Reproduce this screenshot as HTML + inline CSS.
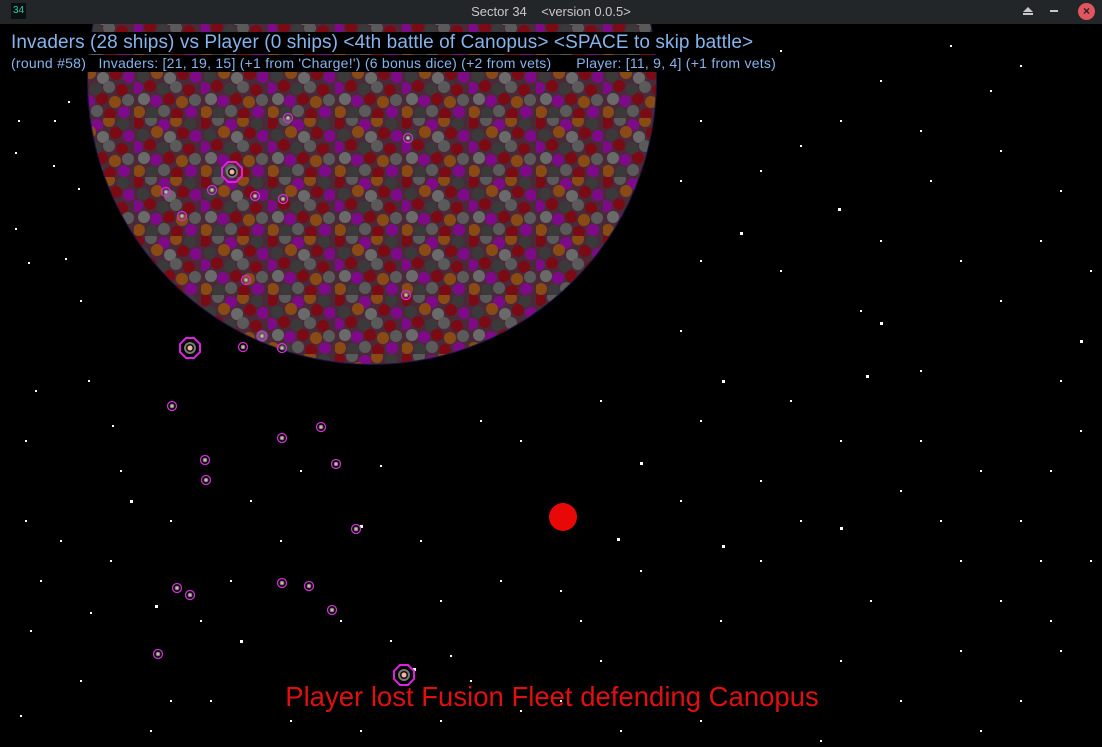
<!DOCTYPE html>
<html><head><meta charset="utf-8"><style>
html,body{margin:0;padding:0;background:#000;width:1102px;height:747px;overflow:hidden;font-family:"Liberation Sans",sans-serif}
#bar{position:absolute;left:0;top:0;width:1102px;height:24px}
#bar .t{position:absolute;left:0;width:1102px;top:4px;text-align:center;color:#c8c8c8;font-size:13px}
#ic{position:absolute;left:11px;top:3px;width:15px;height:16px;background:#0a0f10;color:#2fd0b0;font-size:10px;line-height:16px;text-align:center}
#close{position:absolute;left:1078px;top:3px;width:17px;height:17px;border-radius:50%;background:#e05560;color:#222;font-size:12px;line-height:17px;text-align:center;font-weight:bold}
.l1{position:absolute;left:8px;top:32px;background:#000;color:#86b4ec;font-size:19px;letter-spacing:0.1px;padding:0 3px;white-space:pre;line-height:22px}
.l2{position:absolute;left:8px;top:55px;background:#000;color:#86b4ec;font-size:14px;letter-spacing:0.25px;padding:0 3px;white-space:pre;line-height:17px}
#msg{position:absolute;left:0;width:1104px;top:681px;text-align:center;color:#e01010;font-size:27.5px}
</style></head><body>
<svg width="1102" height="747" style="position:absolute;left:0;top:0">
<defs>
<pattern id="p" width="67" height="59" patternUnits="userSpaceOnUse">
<rect width="67" height="59" fill="#4a2a38"/>
<circle cx="4" cy="5" r="6" fill="#7a0a14"/><circle cx="17" cy="2" r="6" fill="#5a5a5a"/><circle cx="30" cy="7" r="6" fill="#7e0a8a"/><circle cx="42" cy="3" r="6" fill="#8a4a14"/><circle cx="56" cy="6" r="6" fill="#3a3a3a"/>
<circle cx="9" cy="17" r="6" fill="#3a3a3a"/><circle cx="23" cy="14" r="6" fill="#8a4a14"/><circle cx="36" cy="19" r="6" fill="#6a6a6a"/><circle cx="49" cy="15" r="6" fill="#7a0a14"/><circle cx="62" cy="18" r="6" fill="#7e0a8a"/>
<circle cx="3" cy="29" r="6" fill="#7e0a8a"/><circle cx="16" cy="27" r="6" fill="#7a0a14"/><circle cx="29" cy="30" r="6" fill="#3a3a3a"/><circle cx="42" cy="28" r="6" fill="#5a5a5a"/><circle cx="55" cy="31" r="6" fill="#7a0a14"/>
<circle cx="10" cy="40" r="6" fill="#6a6a6a"/><circle cx="22" cy="42" r="6" fill="#7e0a8a"/><circle cx="35" cy="40" r="6" fill="#7a0a14"/><circle cx="48" cy="43" r="6" fill="#8a4a14"/><circle cx="61" cy="41" r="6" fill="#5a5a5a"/>
<circle cx="5" cy="53" r="6" fill="#8a4a14"/><circle cx="18" cy="54" r="6" fill="#3a3a3a"/><circle cx="30" cy="52" r="6" fill="#5a5a5a"/><circle cx="43" cy="55" r="6" fill="#7a0a14"/><circle cx="57" cy="53" r="6" fill="#7e0a8a"/>
</pattern>
<g id="s"><circle r="4.5" fill="none" stroke="#d030d0" stroke-width="1.3"/><circle r="2.3" fill="#888"/><circle r="1" fill="#f4c0b0"/></g>
<g id="b"><polygon points="-4,-10 4,-10 10,-4 10,4 4,10 -4,10 -10,4 -10,-4" fill="none" stroke="#e020e0" stroke-width="2"/><circle r="6" fill="#777"/><circle r="4" fill="#111"/><circle r="2.5" fill="#f0b8a0"/></g>
</defs>
<g fill="#fff">
<rect x="100" y="65" width="2" height="2"/><rect x="68" y="101" width="2" height="2"/><rect x="18" y="120" width="2" height="2"/><rect x="54" y="120" width="2" height="2"/><rect x="15" y="152" width="2" height="2"/><rect x="53" y="165" width="2" height="2"/><rect x="78" y="188" width="2" height="2"/><rect x="15" y="228" width="2" height="2"/><rect x="28" y="262" width="2" height="2"/><rect x="65" y="258" width="2" height="2"/><rect x="80" y="300" width="2" height="2"/><rect x="35" y="390" width="2" height="2"/><rect x="88" y="380" width="2" height="2"/><rect x="25" y="440" width="2" height="2"/><rect x="112" y="425" width="2" height="2"/><rect x="130" y="500" width="3" height="3"/><rect x="25" y="520" width="2" height="2"/><rect x="110" y="560" width="2" height="2"/><rect x="40" y="580" width="2" height="2"/><rect x="90" y="612" width="2" height="2"/><rect x="30" y="630" width="2" height="2"/><rect x="155" y="605" width="3" height="3"/><rect x="80" y="680" width="2" height="2"/><rect x="20" y="715" width="2" height="2"/><rect x="150" y="730" width="2" height="2"/><rect x="210" y="700" width="2" height="2"/><rect x="240" y="640" width="3" height="3"/><rect x="230" y="580" width="2" height="2"/><rect x="280" y="540" width="2" height="2"/><rect x="250" y="500" width="2" height="2"/><rect x="300" y="470" width="2" height="2"/><rect x="380" y="465" width="2" height="2"/><rect x="360" y="525" width="3" height="3"/><rect x="420" y="540" width="2" height="2"/><rect x="440" y="600" width="2" height="2"/><rect x="390" y="640" width="2" height="2"/><rect x="413" y="668" width="3" height="3"/><rect x="450" y="655" width="2" height="2"/><rect x="470" y="680" width="2" height="2"/><rect x="520" y="710" width="2" height="2"/><rect x="600" y="660" width="2" height="2"/><rect x="640" y="462" width="3" height="3"/><rect x="617" y="538" width="3" height="3"/><rect x="560" y="590" width="2" height="2"/><rect x="520" y="440" width="2" height="2"/><rect x="480" y="420" width="2" height="2"/><rect x="600" y="400" width="2" height="2"/><rect x="700" y="420" width="2" height="2"/><rect x="680" y="500" width="2" height="2"/><rect x="720" y="620" width="2" height="2"/><rect x="760" y="560" width="2" height="2"/><rect x="722" y="545" width="3" height="3"/><rect x="800" y="520" width="2" height="2"/><rect x="760" y="480" width="2" height="2"/><rect x="840" y="527" width="3" height="3"/><rect x="870" y="600" width="2" height="2"/><rect x="840" y="660" width="2" height="2"/><rect x="900" y="700" width="2" height="2"/><rect x="960" y="650" width="2" height="2"/><rect x="1000" y="600" width="2" height="2"/><rect x="960" y="560" width="2" height="2"/><rect x="1020" y="520" width="2" height="2"/><rect x="1050" y="470" width="2" height="2"/><rect x="1080" y="430" width="2" height="2"/><rect x="1060" y="380" width="2" height="2"/><rect x="1080" y="340" width="3" height="3"/><rect x="1000" y="300" width="2" height="2"/><rect x="960" y="260" width="2" height="2"/><rect x="1040" y="240" width="2" height="2"/><rect x="1060" y="190" width="2" height="2"/><rect x="1000" y="150" width="2" height="2"/><rect x="990" y="90" width="2" height="2"/><rect x="1020" y="65" width="2" height="2"/><rect x="950" y="45" width="2" height="2"/><rect x="880" y="80" width="2" height="2"/><rect x="840" y="120" width="2" height="2"/><rect x="800" y="145" width="2" height="2"/><rect x="838" y="208" width="3" height="3"/><rect x="740" y="232" width="3" height="3"/><rect x="880" y="240" width="2" height="2"/><rect x="780" y="270" width="2" height="2"/><rect x="700" y="260" width="2" height="2"/><rect x="680" y="330" width="2" height="2"/><rect x="722" y="380" width="3" height="3"/><rect x="860" y="310" width="2" height="2"/><rect x="880" y="322" width="3" height="3"/><rect x="920" y="370" width="2" height="2"/><rect x="866" y="375" width="3" height="3"/><rect x="790" y="400" width="2" height="2"/><rect x="840" y="440" width="2" height="2"/><rect x="920" y="440" width="2" height="2"/><rect x="980" y="470" width="2" height="2"/><rect x="900" y="490" width="2" height="2"/><rect x="940" y="520" width="2" height="2"/><rect x="1040" y="560" width="2" height="2"/><rect x="1060" y="650" width="2" height="2"/><rect x="1020" y="700" width="2" height="2"/><rect x="980" y="730" width="2" height="2"/><rect x="820" y="740" width="2" height="2"/><rect x="700" y="720" width="2" height="2"/><rect x="620" y="730" width="2" height="2"/><rect x="360" y="730" width="2" height="2"/><rect x="290" y="720" width="2" height="2"/><rect x="780" y="50" width="2" height="2"/><rect x="700" y="120" width="2" height="2"/><rect x="680" y="180" width="2" height="2"/><rect x="760" y="170" width="2" height="2"/><rect x="930" y="180" width="2" height="2"/><rect x="1090" y="270" width="2" height="2"/><rect x="920" y="130" width="2" height="2"/><rect x="1090" y="560" width="2" height="2"/><rect x="1050" y="620" width="2" height="2"/><rect x="580" y="620" width="2" height="2"/><rect x="500" y="580" width="2" height="2"/><rect x="640" y="570" width="2" height="2"/><rect x="120" y="470" width="2" height="2"/><rect x="170" y="520" width="2" height="2"/><rect x="60" y="540" width="2" height="2"/><rect x="200" y="620" width="2" height="2"/><rect x="170" y="700" width="2" height="2"/><rect x="340" y="620" width="2" height="2"/><rect x="440" y="720" width="2" height="2"/><rect x="560" y="700" width="2" height="2"/></g>
<circle cx="372" cy="80" r="285" fill="#1a1440"/>
<circle cx="372" cy="80" r="284" fill="url(#p)"/>
<rect x="0" y="0" width="1102" height="24" fill="#232629"/>
<g>
<use href="#s" x="288" y="118"/><use href="#s" x="408" y="138"/><use href="#s" x="166" y="192"/><use href="#s" x="212" y="190"/><use href="#s" x="255" y="196"/><use href="#s" x="283" y="199"/><use href="#s" x="182" y="216"/><use href="#s" x="246" y="280"/><use href="#s" x="406" y="295"/><use href="#s" x="262" y="336"/><use href="#s" x="243" y="347"/><use href="#s" x="282" y="348"/><use href="#s" x="172" y="406"/><use href="#s" x="321" y="427"/><use href="#s" x="282" y="438"/><use href="#s" x="205" y="460"/><use href="#s" x="336" y="464"/><use href="#s" x="206" y="480"/><use href="#s" x="356" y="529"/><use href="#s" x="177" y="588"/><use href="#s" x="190" y="595"/><use href="#s" x="282" y="583"/><use href="#s" x="309" y="586"/><use href="#s" x="332" y="610"/><use href="#s" x="158" y="654"/>
<use href="#b" x="232" y="172"/><use href="#b" x="190" y="348"/><use href="#b" x="404" y="675"/>
</g>
<circle cx="563" cy="517" r="14" fill="#e80808"/>
<g fill="#c8c8c8"><polygon points="1023,12 1028,7 1033,12"/><rect x="1023" y="13" width="10" height="2"/><rect x="1050" y="10" width="8" height="2"/></g>
</svg>
<div id="bar"><div class="t">Sector 34&nbsp;&nbsp;&nbsp;&nbsp;&lt;version 0.0.5&gt;</div></div>
<div id="ic">34</div>
<div id="close">×</div>
<div class="l1">Invaders (28 ships) vs Player (0 ships) &lt;4th battle of Canopus&gt; &lt;SPACE to skip battle&gt;</div>
<div class="l2">(round #58)   Invaders: [21, 19, 15] (+1 from 'Charge!') (6 bonus dice) (+2 from vets)      Player: [11, 9, 4] (+1 from vets)</div>
<div id="msg">Player lost Fusion Fleet defending Canopus</div>
</body></html>
